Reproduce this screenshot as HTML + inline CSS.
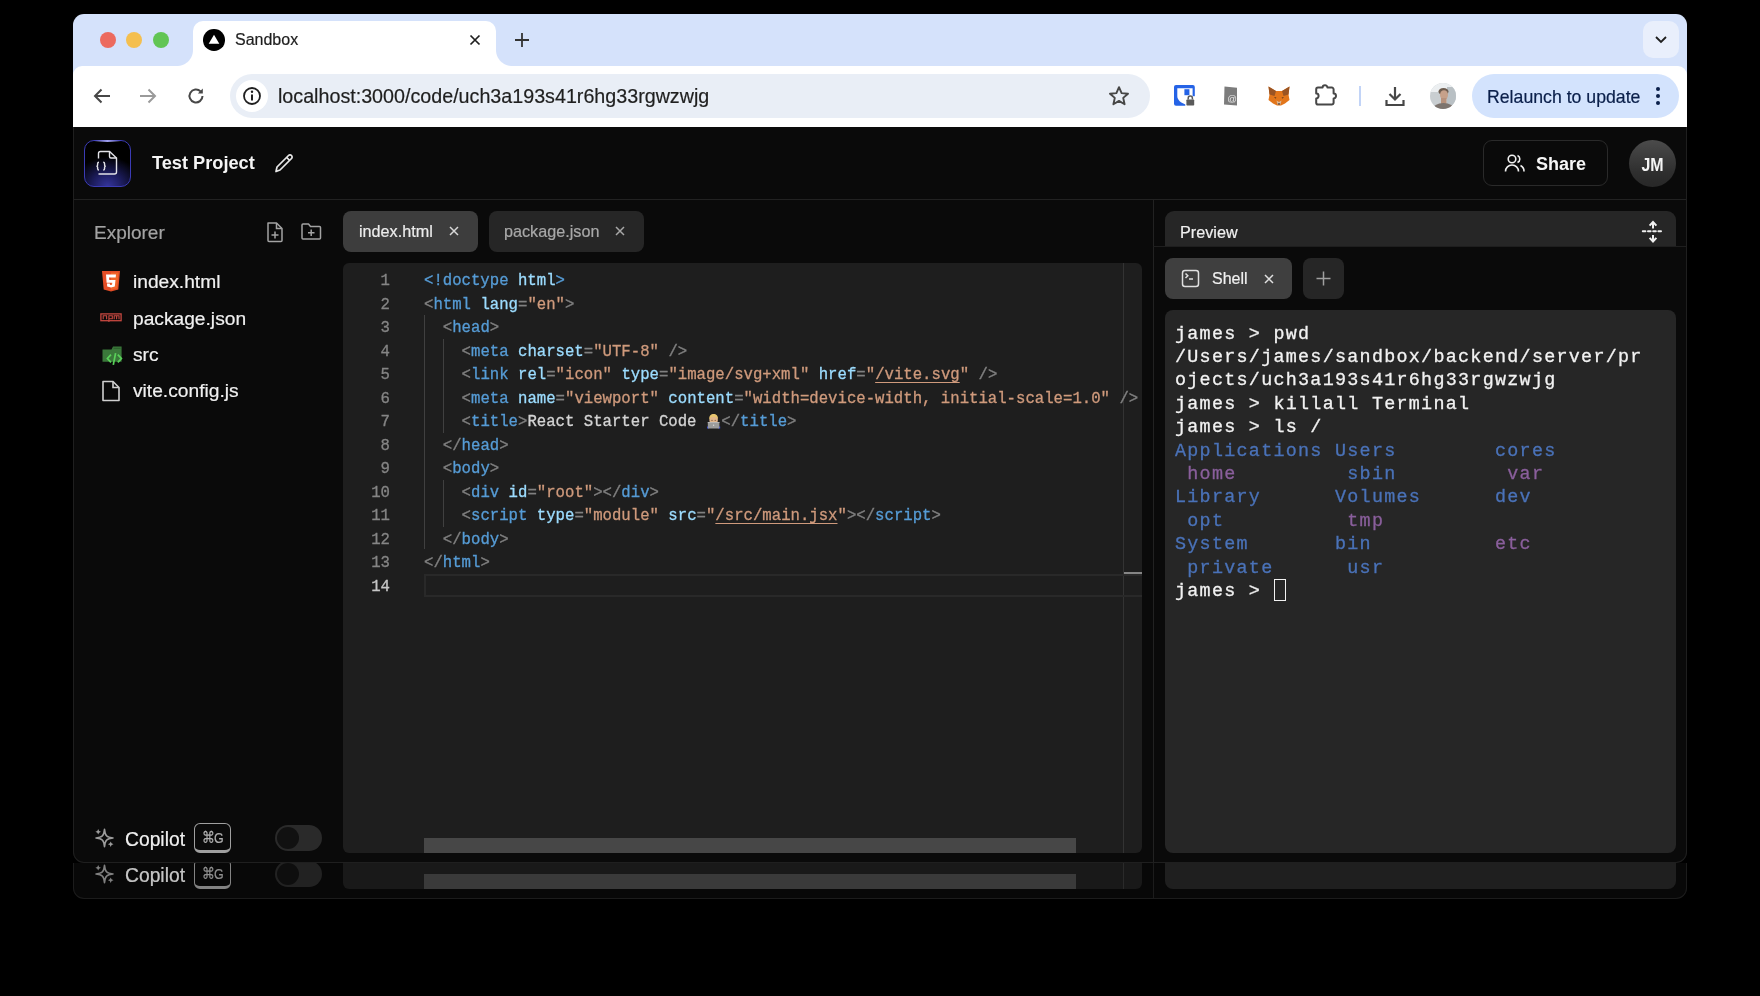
<!DOCTYPE html>
<html><head><meta charset="utf-8">
<style>
*{box-sizing:border-box;margin:0;padding:0}
html,body{width:1760px;height:996px;background:#000;overflow:hidden;font-family:"Liberation Sans",sans-serif}
.a{position:absolute}
.layer{position:absolute;left:0;top:0;width:1760px;height:996px}
#win{clip-path:inset(14px 73px 133px 73px round 11px);will-change:transform}
#ghost{clip-path:inset(863px 73px 97px 73px round 0 0 11px 11px);will-change:transform}
.dot{width:16px;height:16px;border-radius:50%}
.mono{font-family:"Liberation Mono",monospace;-webkit-text-stroke:0.3px}
.t{white-space:pre;line-height:1;-webkit-text-stroke:0.2px}
svg{position:absolute;overflow:visible}
</style></head><body>
<div id="win" class="layer">
  <!-- tab strip -->
  <div class="a" style="left:73px;top:13px;width:1614px;height:66px;background:#d5e2fb"></div>
  <div class="a dot" style="left:100.2px;top:32.2px;background:#ec6a5e"></div>
  <div class="a dot" style="left:126.3px;top:32.2px;background:#f4bf4f"></div>
  <div class="a dot" style="left:152.6px;top:32.2px;background:#61c554"></div>
  <!-- active tab -->
  <div class="a" style="left:193px;top:21px;width:303px;height:46px;background:#fff;border-radius:10px 10px 0 0"></div>
  <div class="a" style="left:177px;top:50px;width:16px;height:16px;background:radial-gradient(circle at 0 0,#d5e2fb 15.5px,#fff 16.5px)"></div>
  <div class="a" style="left:496px;top:50px;width:16px;height:16px;background:radial-gradient(circle at 100% 0,#d5e2fb 15.5px,#fff 16.5px)"></div>
  <div class="a" style="left:203.3px;top:29.3px;width:21.4px;height:21.4px;border-radius:50%;background:#000"></div>
  <svg style="left:204px;top:30px" width="20" height="20"><path d="M10 4.8 L15.3 13.8 H4.7 Z" fill="#fff"></path></svg>
  <div class="a t" style="left:235px;top:32.4px;font-size:16px;color:#1f1f1f">Sandbox</div>
  <svg style="left:470px;top:35px" width="10" height="10"><path d="M0.5 0.5L9.5 9.5M9.5 0.5L0.5 9.5" stroke="#1f1f1f" stroke-width="1.7"></path></svg>
  <svg style="left:514px;top:32px" width="16" height="16"><path d="M8 1V15M1 8H15" stroke="#333" stroke-width="1.8"></path></svg>
  <div class="a" style="left:1642.7px;top:21.2px;width:36.5px;height:36.5px;border-radius:10px;background:#e9effc"></div>
  <svg style="left:1654px;top:35px" width="14" height="9"><path d="M2 2L7 7L12 2" fill="none" stroke="#1f1f1f" stroke-width="1.8"></path></svg>

  <!-- toolbar -->
  <div class="a" style="left:73px;top:66px;width:1614px;height:61px;background:#fff;border-radius:9px 9px 0 0"></div>
  <svg style="left:92px;top:86px" width="20" height="20"><path d="M18 10H3M9.5 3.5L3 10L9.5 16.5" fill="none" stroke="#474747" stroke-width="2"></path></svg>
  <svg style="left:138px;top:86px" width="20" height="20"><path d="M2 10H17M10.5 3.5L17 10L10.5 16.5" fill="none" stroke="#9a9a9a" stroke-width="2"></path></svg>
  <svg style="left:186px;top:86px" width="20" height="20"><path d="M16.5 10A6.5 6.5 0 1 1 14.6 5.4" fill="none" stroke="#474747" stroke-width="2"></path><path d="M16.8 2.5V7.5H11.8Z" fill="#474747"></path></svg>
  <div class="a" style="left:230px;top:74px;width:920px;height:44px;border-radius:22px;background:#e9eef6"></div>
  <div class="a" style="left:236px;top:80px;width:32px;height:32px;border-radius:50%;background:#fff"></div>
  <svg style="left:242px;top:86px" width="20" height="20"><circle cx="10" cy="10" r="8" fill="none" stroke="#1f1f1f" stroke-width="1.8"></circle><path d="M10 8.5V14.5" stroke="#1f1f1f" stroke-width="2"></path><circle cx="10" cy="5.8" r="1.2" fill="#1f1f1f"></circle></svg>
  <div class="a t" style="left:278px;top:87px;font-size:19.7px;color:#1f1f1f">localhost:3000/code/uch3a193s41r6hg33rgwzwjg</div>
  <svg style="left:1108px;top:85px" width="22" height="22"><path d="M11 2.2L13.6 8.1L20 8.7L15.2 12.9L16.6 19.2L11 15.9L5.4 19.2L6.8 12.9L2 8.7L8.4 8.1Z" fill="none" stroke="#474747" stroke-width="1.9" stroke-linejoin="round"></path></svg>
  <!-- extension icons -->
  <svg style="left:1174px;top:85px" width="22" height="22"><rect x="0" y="0" width="20.8" height="20.8" rx="2" fill="#2563e6"></rect><path d="M3.3 3.2H18.6V19.5H11.5C7 18 3.3 15 3.3 11Z" fill="#fff"></path><rect x="10.4" y="4.2" width="5" height="6" fill="#2563e6"></rect><rect x="11.3" y="11.2" width="10" height="10" fill="#fff"></rect><rect x="12.4" y="14.4" width="7.8" height="6.2" rx="0.8" fill="#5a5a5a"></rect><path d="M14.2 14.6V13.2A2.1 2.1 0 0 1 18.4 13.2V14.6" fill="none" stroke="#5a5a5a" stroke-width="1.5"></path></svg>
  <svg style="left:1223px;top:86px" width="15" height="20"><path d="M1.5 0.5L14 1.8V19.5L1 18.5Z" fill="#7c7c7c"></path><text x="9" y="16" font-size="9.5" font-family="Liberation Sans" fill="#e8e8e8" text-anchor="middle">@</text></svg>
  <svg style="left:1267.5px;top:86px" width="22" height="20"><path d="M0.5 0.5L8 5H14L21.5 0.5L20.5 8.5L21.5 14L17 17.5L13 19.5H9L5 17.5L0.5 14L1.5 8.5Z" fill="#e2761b"></path><path d="M0.5 0.5L8 5L6.5 10L1.5 8.5Z M21.5 0.5L14 5L15.5 10L20.5 8.5Z" fill="#9a5423"></path><path d="M8.5 14.5L11 16L13.5 14.5L12.5 18.5H9.5Z" fill="#d9b89a"></path><path d="M6 11L8.5 11.8L7.5 12.6Z M16 11L13.5 11.8L14.5 12.6Z" fill="#3a2a22"></path><path d="M9.8 17.5H12.2L11 19Z" fill="#1a1a1a"></path></svg>
  <svg style="left:1315px;top:83px" width="23" height="23"><path d="M3 4.6H7.6A2.4 2.4 0 0 1 12.4 4.6H16.8A1.8 1.8 0 0 1 18.6 6.4V10.6A2.4 2.4 0 0 1 18.6 15.4V19.8A1.8 1.8 0 0 1 16.8 21.6H3A1.8 1.8 0 0 1 1.2 19.8V15.4A2.4 2.4 0 0 0 1.2 10.6V6.4A1.8 1.8 0 0 1 3 4.6Z" fill="none" stroke="#474747" stroke-width="2" stroke-linejoin="round"></path></svg>
  <div class="a" style="left:1359px;top:86px;width:2px;height:20px;background:#c2d4f7"></div>
  <svg style="left:1384px;top:85px" width="22" height="22"><path d="M11 2V14M5.5 9L11 14.5L16.5 9" fill="none" stroke="#474747" stroke-width="2.2"></path><path d="M2.5 15V20H19.5V15" fill="none" stroke="#474747" stroke-width="2.2"></path></svg>
  <svg style="left:1429.7px;top:82.9px" width="26" height="26"><defs><clipPath id="avc"><circle cx="13" cy="13" r="13"></circle></clipPath></defs><g clip-path="url(#avc)"><rect width="26" height="26" fill="#c9ced1"></rect><rect x="0" y="0" width="26" height="9" fill="#eceff1"></rect><rect x="17" y="4" width="9" height="18" fill="#b9c0c4"></rect><ellipse cx="13.5" cy="8.5" rx="5" ry="3.6" fill="#6e5d50"></ellipse><ellipse cx="14" cy="12" rx="4" ry="4.8" fill="#c7a18a"></ellipse><rect x="11" y="15" width="5.5" height="6" fill="#b8927c"></rect><ellipse cx="13.5" cy="27" rx="11" ry="7" fill="#7d746e"></ellipse></g></svg>
  <div class="a" style="left:1472px;top:74px;width:207px;height:44px;border-radius:22px;background:#d3e3fd"></div>
  <div class="a t" style="left:1487px;top:88.5px;font-size:17.7px;color:#0a1f4a">Relaunch to update</div>
  <svg style="left:1654px;top:86px" width="8" height="20"><circle cx="4" cy="3" r="2" fill="#0a1f4a"></circle><circle cx="4" cy="10" r="2" fill="#0a1f4a"></circle><circle cx="4" cy="17" r="2" fill="#0a1f4a"></circle></svg>

  <!-- app -->
  <div class="a" style="left:73px;top:127px;width:1614px;height:735px;background:#0a0a0a"></div>
  <div class="a" style="left:73px;top:199px;width:1614px;height:1px;background:#222"></div>
  <!-- logo -->
  <div class="a" style="left:84px;top:140px;width:47px;height:47px;border-radius:10px;border:1.6px solid #3b3bb5;background:radial-gradient(ellipse 75% 65% at 50% 100%,#34349a 0%,#1c1c5c 45%,#000 100%)"></div>
  <div class="a" style="left:94px;top:140px;width:27px;height:2px;background:linear-gradient(90deg,rgba(150,150,240,0),#a0a0f0,rgba(150,150,240,0))"></div>
  <svg style="left:80px;top:136px" width="56" height="56"><path d="M18.5 22.5V17.5A2 2 0 0 1 20.5 15.5H29.5L36.5 22V36A2 2 0 0 1 34.5 38H18.5" fill="none" stroke="#e2e2e8" stroke-width="1.4"></path><path d="M29.5 15.5V20.5A1.5 1.5 0 0 0 31 22H36.5" fill="none" stroke="#e2e2e8" stroke-width="1.4"></path><path d="M19 26.3Q17.6 26.3 17.6 27.8V29.3Q17.6 30.2 16.4 30.2Q17.6 30.2 17.6 31.1V32.6Q17.6 34.1 19 34.1M23.2 26.3Q24.6 26.3 24.6 27.8V29.3Q24.6 30.2 25.8 30.2Q24.6 30.2 24.6 31.1V32.6Q24.6 34.1 23.2 34.1" fill="none" stroke="#e2e2e8" stroke-width="1.4"></path></svg>
  <div class="a t" style="left:152px;top:154px;font-size:18.2px;font-weight:bold;color:#f5f5f5;-webkit-text-stroke:0">Test Project</div>
  <svg style="left:273px;top:152px" width="22" height="22"><path d="M3 19.5L4 15L15.5 3.5A2.1 2.1 0 0 1 18.5 6.5L7 18Z" fill="none" stroke="#e8e8e8" stroke-width="1.7" stroke-linejoin="round"></path><path d="M13.6 5.4L16.6 8.4" stroke="#e8e8e8" stroke-width="1.5"></path></svg>
  <div class="a" style="left:1483px;top:140px;width:125px;height:46px;border-radius:9px;border:1px solid #2a2a2a;background:#0a0a0a"></div>
  <svg style="left:1504px;top:153px" width="22" height="20"><circle cx="8" cy="6" r="3.8" fill="none" stroke="#f0f0f0" stroke-width="1.6"></circle><path d="M1.5 18.5A6.5 6.5 0 0 1 14.5 18.5" fill="none" stroke="#f0f0f0" stroke-width="1.6"></path><path d="M13.5 2.5A3.8 3.8 0 0 1 13.5 9.5M16.5 12.5A6.5 6.5 0 0 1 20 18.5" fill="none" stroke="#f0f0f0" stroke-width="1.6"></path></svg>
  <div class="a t" style="left:1536px;top:154.5px;font-size:18px;font-weight:bold;color:#f5f5f5;-webkit-text-stroke:0">Share</div>
  <div class="a" style="left:1629px;top:140px;width:47px;height:47px;border-radius:50%;background:linear-gradient(#4b4b4b,#2e2e2e 70%,#282828)"></div>
  <div class="a t" style="left:1629px;top:154.5px;width:47px;text-align:center;font-size:19px;font-weight:bold;color:#f5f5f5;-webkit-text-stroke:0;transform:scaleX(0.84)">JM</div>

  <!-- explorer -->
  <div class="a t" style="left:94px;top:222.5px;font-size:19px;color:#a3a3a3">Explorer</div>
  <svg style="left:265px;top:221px" width="20" height="22"><path d="M3 2H11.5L17 7.5V19.5A1 1 0 0 1 16 20.5H4A1 1 0 0 1 3 19.5Z" fill="none" stroke="#a3a3a3" stroke-width="1.5" stroke-linejoin="round"></path><path d="M11.5 2V7.5H17M10 10.5V17.5M6.5 14H13.5" fill="none" stroke="#a3a3a3" stroke-width="1.5"></path></svg>
  <svg style="left:300px;top:222px" width="23" height="19"><path d="M2 3A1 1 0 0 1 3 2H8.5L10.5 4.5H19.5A1 1 0 0 1 20.5 5.5V16A1 1 0 0 1 19.5 17H3A1 1 0 0 1 2 16Z" fill="none" stroke="#a3a3a3" stroke-width="1.5" stroke-linejoin="round"></path><path d="M11.2 7.5V14M8 10.8H14.5" stroke="#a3a3a3" stroke-width="1.5"></path></svg>

  <svg style="left:101px;top:270px" width="20" height="22"><path d="M1 1H19L17.3 19.5L10 21.5L2.7 19.5Z" fill="#e44d26"></path><path d="M10 2.5H17.5L16 18.3L10 20Z" fill="#f16529"></path><path d="M5 4.5H15L14.7 7.5H8L8.3 10H14.5L13.8 16.5L10 17.6L6.2 16.5L6 13.5H8.8L9 14.8L10 15.1L11 14.8L11.3 12.7H5.6Z" fill="#fff"></path></svg>
  <div class="a t" style="left:133px;top:272px;font-size:19.2px;color:#f0f0f0">index.html</div>
  <svg style="left:100px;top:313px" width="23" height="10"><rect x="0.9" y="0.9" width="20.2" height="6.8" fill="none" stroke="#c64840" stroke-width="1.3"></rect><path d="M3.2 6.3V2.7H6.6V6.3M8.9 8.9V2.7H12.3V5.7H8.9M14.2 6.3V2.7H19V6.3M16.6 2.7V6.3" fill="none" stroke="#c64840" stroke-width="1.1"></path></svg>
  <div class="a t" style="left:133px;top:309px;font-size:19.2px;color:#f0f0f0">package.json</div>
  <svg style="left:101px;top:345px" width="23" height="22"><path d="M1.5 4.6H10.5L12 1.6H20.6V16.7H1.5Z" fill="#3a783a"></path><path d="M12.6 3.3H19.6" stroke="#2b5d2b" stroke-width="1"></path><path d="M10 9.6L6.4 13.5L10 17.4M16.8 9.6L20.4 13.5L16.8 17.4M14.6 8.2L12.3 19.8" fill="none" stroke="#5ad25a" stroke-width="1.7"></path></svg>
  <div class="a t" style="left:133px;top:345.2px;font-size:19.2px;color:#f0f0f0">src</div>
  <svg style="left:101px;top:380px" width="20" height="22"><path d="M2 1.5H12L18 7.5V20.5H2Z" fill="none" stroke="#d0d0d0" stroke-width="1.6" stroke-linejoin="round"></path><path d="M12 1.5V7.5H18" fill="none" stroke="#d0d0d0" stroke-width="1.6"></path></svg>
  <div class="a t" style="left:133px;top:381.2px;font-size:19.2px;color:#f0f0f0">vite.config.js</div>

  <!-- editor tabs -->
  <div class="a" style="left:343px;top:211px;width:135px;height:41px;border-radius:8px;background:#3d3d3d"></div>
  <div class="a t" style="left:359px;top:223px;font-size:16.2px;color:#ececec">index.html</div>
  <svg style="left:449px;top:226px" width="10" height="10"><path d="M1 1L9 9M9 1L1 9" stroke="#d8d8d8" stroke-width="1.5"></path></svg>
  <div class="a" style="left:489px;top:211px;width:155px;height:41px;border-radius:8px;background:#262626"></div>
  <div class="a t" style="left:504px;top:223px;font-size:16.2px;color:#a8a8a8">package.json</div>
  <svg style="left:615px;top:226px" width="10" height="10"><path d="M1 1L9 9M9 1L1 9" stroke="#a8a8a8" stroke-width="1.5"></path></svg>

  <!-- code box -->
  <div class="a" style="left:343px;top:263px;width:799px;height:590px;border-radius:6px;background:#1e1e1e"></div>
  <div class="a" style="left:1123px;top:263px;width:1px;height:590px;background:#333"></div>
  <div class="a" style="left:1124px;top:572px;width:18px;height:3px;background:#858585"></div>
  <div class="a" style="left:424px;top:574px;width:718px;height:23px;border:2px solid #292929;border-right:none"></div>
  <div class="a" style="left:424px;top:837.5px;width:652px;height:15.5px;background:#474747"></div>
  <!-- indent guides -->
  <div class="a" style="left:424px;top:315px;width:1px;height:234px;background:#404040"></div>
  <div class="a" style="left:443px;top:339px;width:1px;height:94px;background:#404040"></div>
  <div class="a" style="left:443px;top:480px;width:1px;height:47px;background:#404040"></div>
  <div id="code" class="a mono" style="left:343px;top:270px;font-size:15.67px;line-height:23.5px;white-space:pre;color:#d4d4d4"><div style="position:relative;height:23.5px"><span style="position:absolute;left:0;width:47px;text-align:right;color:#858585">1</span><span style="position:absolute;left:81px"><span style="color:#569cd6">&lt;!doctype</span><span style="color:#d4d4d4"> </span><span style="color:#9cdcfe">html</span><span style="color:#569cd6">&gt;</span></span></div><div style="position:relative;height:23.5px"><span style="position:absolute;left:0;width:47px;text-align:right;color:#858585">2</span><span style="position:absolute;left:81px"><span style="color:#808080">&lt;</span><span style="color:#569cd6">html</span><span style="color:#d4d4d4"> </span><span style="color:#9cdcfe">lang</span><span style="color:#808080">=</span><span style="color:#cf9a7c">"en"</span><span style="color:#808080">&gt;</span></span></div><div style="position:relative;height:23.5px"><span style="position:absolute;left:0;width:47px;text-align:right;color:#858585">3</span><span style="position:absolute;left:81px"><span style="color:#d4d4d4">  </span><span style="color:#808080">&lt;</span><span style="color:#569cd6">head</span><span style="color:#808080">&gt;</span></span></div><div style="position:relative;height:23.5px"><span style="position:absolute;left:0;width:47px;text-align:right;color:#858585">4</span><span style="position:absolute;left:81px"><span style="color:#d4d4d4">    </span><span style="color:#808080">&lt;</span><span style="color:#569cd6">meta</span><span style="color:#d4d4d4"> </span><span style="color:#9cdcfe">charset</span><span style="color:#808080">=</span><span style="color:#cf9a7c">"UTF-8"</span><span style="color:#d4d4d4"> </span><span style="color:#808080">/&gt;</span></span></div><div style="position:relative;height:23.5px"><span style="position:absolute;left:0;width:47px;text-align:right;color:#858585">5</span><span style="position:absolute;left:81px"><span style="color:#d4d4d4">    </span><span style="color:#808080">&lt;</span><span style="color:#569cd6">link</span><span style="color:#d4d4d4"> </span><span style="color:#9cdcfe">rel</span><span style="color:#808080">=</span><span style="color:#cf9a7c">"icon"</span><span style="color:#d4d4d4"> </span><span style="color:#9cdcfe">type</span><span style="color:#808080">=</span><span style="color:#cf9a7c">"image/svg+xml"</span><span style="color:#d4d4d4"> </span><span style="color:#9cdcfe">href</span><span style="color:#808080">=</span><span style="color:#cf9a7c">"</span><span style="color:#cf9a7c;text-decoration:underline;text-underline-offset:3px">/vite.svg</span><span style="color:#cf9a7c">"</span><span style="color:#d4d4d4"> </span><span style="color:#808080">/&gt;</span></span></div><div style="position:relative;height:23.5px"><span style="position:absolute;left:0;width:47px;text-align:right;color:#858585">6</span><span style="position:absolute;left:81px"><span style="color:#d4d4d4">    </span><span style="color:#808080">&lt;</span><span style="color:#569cd6">meta</span><span style="color:#d4d4d4"> </span><span style="color:#9cdcfe">name</span><span style="color:#808080">=</span><span style="color:#cf9a7c">"viewport"</span><span style="color:#d4d4d4"> </span><span style="color:#9cdcfe">content</span><span style="color:#808080">=</span><span style="color:#cf9a7c">"width=device-width, initial-scale=1.0"</span><span style="color:#d4d4d4"> </span><span style="color:#808080">/&gt;</span></span></div><div style="position:relative;height:23.5px"><span style="position:absolute;left:0;width:47px;text-align:right;color:#858585">7</span><span style="position:absolute;left:81px"><span style="color:#d4d4d4">    </span><span style="color:#808080">&lt;</span><span style="color:#569cd6">title</span><span style="color:#808080">&gt;</span><span style="color:#d4d4d4">React Starter Code </span><span style="display:inline-block;width:15.4px;height:16px;vertical-align:-2.5px;position:relative"><svg style="left:0;top:0" width="16" height="16"><rect x="1" y="13.5" width="2" height="2" fill="#2d43d6"></rect><rect x="12.2" y="13.5" width="2" height="2" fill="#2d43d6"></rect><ellipse cx="7.6" cy="7" rx="4.3" ry="4.6" fill="#e2b68c"></ellipse><path d="M3.2 6.5C3 2.5 5 1 7.6 1C10.2 1 12.2 2.5 12 6.5C11 4.5 9.5 4 7.6 4C5.7 4 4.2 4.5 3.2 6.5Z" fill="#e7c56e"></path><circle cx="6" cy="7.3" r="0.6" fill="#6b4a32"></circle><circle cx="9.2" cy="7.3" r="0.6" fill="#6b4a32"></circle><rect x="1.8" y="9" width="11.6" height="6.6" rx="0.6" fill="#9c9c9c"></rect><rect x="1.8" y="9" width="11.6" height="1" fill="#b5b5b5"></rect><circle cx="7.6" cy="12.2" r="0.7" fill="#d8d8d8"></circle></svg></span><span style="color:#808080">&lt;/</span><span style="color:#569cd6">title</span><span style="color:#808080">&gt;</span></span></div><div style="position:relative;height:23.5px"><span style="position:absolute;left:0;width:47px;text-align:right;color:#858585">8</span><span style="position:absolute;left:81px"><span style="color:#d4d4d4">  </span><span style="color:#808080">&lt;/</span><span style="color:#569cd6">head</span><span style="color:#808080">&gt;</span></span></div><div style="position:relative;height:23.5px"><span style="position:absolute;left:0;width:47px;text-align:right;color:#858585">9</span><span style="position:absolute;left:81px"><span style="color:#d4d4d4">  </span><span style="color:#808080">&lt;</span><span style="color:#569cd6">body</span><span style="color:#808080">&gt;</span></span></div><div style="position:relative;height:23.5px"><span style="position:absolute;left:0;width:47px;text-align:right;color:#858585">10</span><span style="position:absolute;left:81px"><span style="color:#d4d4d4">    </span><span style="color:#808080">&lt;</span><span style="color:#569cd6">div</span><span style="color:#d4d4d4"> </span><span style="color:#9cdcfe">id</span><span style="color:#808080">=</span><span style="color:#cf9a7c">"root"</span><span style="color:#808080">&gt;&lt;/</span><span style="color:#569cd6">div</span><span style="color:#808080">&gt;</span></span></div><div style="position:relative;height:23.5px"><span style="position:absolute;left:0;width:47px;text-align:right;color:#858585">11</span><span style="position:absolute;left:81px"><span style="color:#d4d4d4">    </span><span style="color:#808080">&lt;</span><span style="color:#569cd6">script</span><span style="color:#d4d4d4"> </span><span style="color:#9cdcfe">type</span><span style="color:#808080">=</span><span style="color:#cf9a7c">"module"</span><span style="color:#d4d4d4"> </span><span style="color:#9cdcfe">src</span><span style="color:#808080">=</span><span style="color:#cf9a7c">"</span><span style="color:#cf9a7c;text-decoration:underline;text-underline-offset:3px">/src/main.jsx</span><span style="color:#cf9a7c">"</span><span style="color:#808080">&gt;&lt;/</span><span style="color:#569cd6">script</span><span style="color:#808080">&gt;</span></span></div><div style="position:relative;height:23.5px"><span style="position:absolute;left:0;width:47px;text-align:right;color:#858585">12</span><span style="position:absolute;left:81px"><span style="color:#d4d4d4">  </span><span style="color:#808080">&lt;/</span><span style="color:#569cd6">body</span><span style="color:#808080">&gt;</span></span></div><div style="position:relative;height:23.5px"><span style="position:absolute;left:0;width:47px;text-align:right;color:#858585">13</span><span style="position:absolute;left:81px"><span style="color:#808080">&lt;/</span><span style="color:#569cd6">html</span><span style="color:#808080">&gt;</span></span></div><div style="position:relative;height:23.5px"><span style="position:absolute;left:0;width:47px;text-align:right;color:#c6c6c6">14</span><span style="position:absolute;left:81px"></span></div></div>

  <!-- right panel -->
  <div class="a" style="left:1153px;top:200px;width:1px;height:662px;background:#222"></div>
  <div class="a" style="left:1165px;top:211px;width:511px;height:36px;border-radius:9px 9px 0 0;background:#262626"></div>
  <div class="a" style="left:1153px;top:246px;width:534px;height:1px;background:#1e1e1e"></div>
  <div class="a t" style="left:1180px;top:223.5px;font-size:16.2px;color:#f0f0f0">Preview</div>
  <svg style="left:1642px;top:220px" width="22" height="24"><path d="M11 2.5V8.5M11 15V21" stroke="#f0f0f0" stroke-width="2"></path><path d="M7.6 5.6L11 2L14.4 5.6M7.6 17.9L11 21.5L14.4 17.9" fill="none" stroke="#f0f0f0" stroke-width="2"></path><path d="M0.8 11.3H20.6" stroke="#f0f0f0" stroke-width="2" stroke-linecap="round" stroke-dasharray="2.6 2.6"></path></svg>
  <div class="a" style="left:1165px;top:258px;width:127px;height:41px;border-radius:8px;background:#3f3f3f"></div>
  <svg style="left:1181px;top:269px" width="19" height="19"><rect x="1.5" y="1.5" width="16" height="16" rx="2.5" fill="none" stroke="#e0e0e0" stroke-width="1.5"></rect><path d="M4.5 4.5L6.8 6.8L4.5 9M8 10H12" fill="none" stroke="#e0e0e0" stroke-width="1.5"></path></svg>
  <div class="a t" style="left:1212px;top:270.8px;font-size:16px;color:#f0f0f0">Shell</div>
  <svg style="left:1264px;top:274px" width="10" height="10"><path d="M1 1L9 9M9 1L1 9" stroke="#e0e0e0" stroke-width="1.5"></path></svg>
  <div class="a" style="left:1303px;top:258px;width:41px;height:41px;border-radius:8px;background:#262626"></div>
  <svg style="left:1316px;top:271px" width="15" height="15"><path d="M7.5 0.5V14.5M0.5 7.5H14.5" stroke="#a0a0a0" stroke-width="1.5"></path></svg>
  <div class="a" style="left:1165px;top:310px;width:511px;height:543px;border-radius:8px;background:#262626"></div>
  <div id="term" class="a mono" style="left:1175px;top:322.5px;font-size:18.4px;line-height:23.4px;letter-spacing:1.27px;white-space:pre;color:#f2f2f2"><div><span style="color:#f2f2f2">james &gt; pwd</span></div><div><span style="color:#f2f2f2">/Users/james/sandbox/backend/server/pr</span></div><div><span style="color:#f2f2f2">ojects/uch3a193s41r6hg33rgwzwjg</span></div><div><span style="color:#f2f2f2">james &gt; killall Terminal</span></div><div><span style="color:#f2f2f2">james &gt; ls /</span></div><div><span style="color:#4a72b8">Applications</span><span style="color:#f2f2f2"> </span><span style="color:#4a72b8">Users</span><span style="color:#f2f2f2">        </span><span style="color:#4a72b8">cores</span></div><div><span style="color:#f2f2f2"> </span><span style="color:#8a5f9c">home</span><span style="color:#f2f2f2">         </span><span style="color:#4a72b8">sbin</span><span style="color:#f2f2f2">         </span><span style="color:#8a5f9c">var</span></div><div><span style="color:#4a72b8">Library</span><span style="color:#f2f2f2">      </span><span style="color:#4a72b8">Volumes</span><span style="color:#f2f2f2">      </span><span style="color:#4a72b8">dev</span></div><div><span style="color:#f2f2f2"> </span><span style="color:#4a72b8">opt</span><span style="color:#f2f2f2">          </span><span style="color:#8a5f9c">tmp</span></div><div><span style="color:#4a72b8">System</span><span style="color:#f2f2f2">       </span><span style="color:#4a72b8">bin</span><span style="color:#f2f2f2">          </span><span style="color:#8a5f9c">etc</span></div><div><span style="color:#f2f2f2"> </span><span style="color:#4a72b8">private</span><span style="color:#f2f2f2">      </span><span style="color:#4a72b8">usr</span></div><div><span style="color:#f2f2f2">james &gt; </span></div></div>
  <div class="a" style="left:1274px;top:579px;width:12px;height:22px;border:1.5px solid #f2f2f2"></div>

  <!-- bottom copilot -->
  <div id="bottom">
  <svg style="left:94px;top:827px" width="22" height="22"><path d="M10.5 2.4C11.1 8.6 12.4 10.4 19 11C12.4 11.6 11.1 13.4 10.5 19.6C9.9 13.4 8.6 11.6 2 11C8.6 10.4 9.9 8.6 10.5 2.4Z" fill="none" stroke="#9c9c9c" stroke-width="1.6" stroke-linejoin="round"></path><path d="M4.2 2L5.1 3.9L7 4.8L5.1 5.7L4.2 7.6L3.3 5.7L1.4 4.8L3.3 3.9Z M16.7 14.4L17.6 16.3L19.5 17.2L17.6 18.1L16.7 20L15.8 18.1L13.9 17.2L15.8 16.3Z" fill="#9c9c9c"></path></svg>
  <div class="a t" style="left:125px;top:830px;font-size:19.3px;color:#f0f0f0">Copilot</div>
  <div class="a" style="left:194px;top:823px;width:37px;height:30px;border-radius:6px;border:1.5px solid #a0a0a0;border-bottom-width:3px;background:#0a0a0a"></div>
  <div class="a t" style="left:194px;top:830px;width:37px;text-align:center;font-size:15.5px;color:#b0b0b0;transform:scaleX(0.8);letter-spacing:-0.6px">⌘G</div>
  <div class="a" style="left:275px;top:825px;width:47px;height:26px;border-radius:13px;background:#2a2a2a"></div>
  <div class="a" style="left:277px;top:827px;width:22px;height:22px;border-radius:50%;background:#111"></div>
  </div>
</div>
<div class="a" style="left:73px;top:127px;width:1614px;height:736px;border:1px solid #1f1f1f;border-top:none;border-radius:0 0 11px 11px"></div>
<div id="ghost" class="layer"><div id="" class="layer" style="clip-path: none; top: 36px; filter: brightness(0.82);">
  <!-- tab strip -->
  <div class="a" style="left:73px;top:13px;width:1614px;height:66px;background:#d5e2fb"></div>
  <div class="a dot" style="left:100.2px;top:32.2px;background:#ec6a5e"></div>
  <div class="a dot" style="left:126.3px;top:32.2px;background:#f4bf4f"></div>
  <div class="a dot" style="left:152.6px;top:32.2px;background:#61c554"></div>
  <!-- active tab -->
  <div class="a" style="left:193px;top:21px;width:303px;height:46px;background:#fff;border-radius:10px 10px 0 0"></div>
  <div class="a" style="left:177px;top:50px;width:16px;height:16px;background:radial-gradient(circle at 0 0,#d5e2fb 15.5px,#fff 16.5px)"></div>
  <div class="a" style="left:496px;top:50px;width:16px;height:16px;background:radial-gradient(circle at 100% 0,#d5e2fb 15.5px,#fff 16.5px)"></div>
  <div class="a" style="left:203.3px;top:29.3px;width:21.4px;height:21.4px;border-radius:50%;background:#000"></div>
  <svg style="left:204px;top:30px" width="20" height="20"><path d="M10 4.8 L15.3 13.8 H4.7 Z" fill="#fff"></path></svg>
  <div class="a t" style="left:235px;top:32.4px;font-size:16px;color:#1f1f1f">Sandbox</div>
  <svg style="left:470px;top:35px" width="10" height="10"><path d="M0.5 0.5L9.5 9.5M9.5 0.5L0.5 9.5" stroke="#1f1f1f" stroke-width="1.7"></path></svg>
  <svg style="left:514px;top:32px" width="16" height="16"><path d="M8 1V15M1 8H15" stroke="#333" stroke-width="1.8"></path></svg>
  <div class="a" style="left:1642.7px;top:21.2px;width:36.5px;height:36.5px;border-radius:10px;background:#e9effc"></div>
  <svg style="left:1654px;top:35px" width="14" height="9"><path d="M2 2L7 7L12 2" fill="none" stroke="#1f1f1f" stroke-width="1.8"></path></svg>

  <!-- toolbar -->
  <div class="a" style="left:73px;top:66px;width:1614px;height:61px;background:#fff;border-radius:9px 9px 0 0"></div>
  <svg style="left:92px;top:86px" width="20" height="20"><path d="M18 10H3M9.5 3.5L3 10L9.5 16.5" fill="none" stroke="#474747" stroke-width="2"></path></svg>
  <svg style="left:138px;top:86px" width="20" height="20"><path d="M2 10H17M10.5 3.5L17 10L10.5 16.5" fill="none" stroke="#9a9a9a" stroke-width="2"></path></svg>
  <svg style="left:186px;top:86px" width="20" height="20"><path d="M16.5 10A6.5 6.5 0 1 1 14.6 5.4" fill="none" stroke="#474747" stroke-width="2"></path><path d="M16.8 2.5V7.5H11.8Z" fill="#474747"></path></svg>
  <div class="a" style="left:230px;top:74px;width:920px;height:44px;border-radius:22px;background:#e9eef6"></div>
  <div class="a" style="left:236px;top:80px;width:32px;height:32px;border-radius:50%;background:#fff"></div>
  <svg style="left:242px;top:86px" width="20" height="20"><circle cx="10" cy="10" r="8" fill="none" stroke="#1f1f1f" stroke-width="1.8"></circle><path d="M10 8.5V14.5" stroke="#1f1f1f" stroke-width="2"></path><circle cx="10" cy="5.8" r="1.2" fill="#1f1f1f"></circle></svg>
  <div class="a t" style="left:278px;top:87px;font-size:19.7px;color:#1f1f1f">localhost:3000/code/uch3a193s41r6hg33rgwzwjg</div>
  <svg style="left:1108px;top:85px" width="22" height="22"><path d="M11 2.2L13.6 8.1L20 8.7L15.2 12.9L16.6 19.2L11 15.9L5.4 19.2L6.8 12.9L2 8.7L8.4 8.1Z" fill="none" stroke="#474747" stroke-width="1.9" stroke-linejoin="round"></path></svg>
  <!-- extension icons -->
  <svg style="left:1174px;top:85px" width="22" height="22"><rect x="0" y="0" width="20.8" height="20.8" rx="2" fill="#2563e6"></rect><path d="M3.3 3.2H18.6V19.5H11.5C7 18 3.3 15 3.3 11Z" fill="#fff"></path><rect x="10.4" y="4.2" width="5" height="6" fill="#2563e6"></rect><rect x="11.3" y="11.2" width="10" height="10" fill="#fff"></rect><rect x="12.4" y="14.4" width="7.8" height="6.2" rx="0.8" fill="#5a5a5a"></rect><path d="M14.2 14.6V13.2A2.1 2.1 0 0 1 18.4 13.2V14.6" fill="none" stroke="#5a5a5a" stroke-width="1.5"></path></svg>
  <svg style="left:1223px;top:86px" width="15" height="20"><path d="M1.5 0.5L14 1.8V19.5L1 18.5Z" fill="#7c7c7c"></path><text x="9" y="16" font-size="9.5" font-family="Liberation Sans" fill="#e8e8e8" text-anchor="middle">@</text></svg>
  <svg style="left:1267.5px;top:86px" width="22" height="20"><path d="M0.5 0.5L8 5H14L21.5 0.5L20.5 8.5L21.5 14L17 17.5L13 19.5H9L5 17.5L0.5 14L1.5 8.5Z" fill="#e2761b"></path><path d="M0.5 0.5L8 5L6.5 10L1.5 8.5Z M21.5 0.5L14 5L15.5 10L20.5 8.5Z" fill="#9a5423"></path><path d="M8.5 14.5L11 16L13.5 14.5L12.5 18.5H9.5Z" fill="#d9b89a"></path><path d="M6 11L8.5 11.8L7.5 12.6Z M16 11L13.5 11.8L14.5 12.6Z" fill="#3a2a22"></path><path d="M9.8 17.5H12.2L11 19Z" fill="#1a1a1a"></path></svg>
  <svg style="left:1315px;top:83px" width="23" height="23"><path d="M3 4.6H7.6A2.4 2.4 0 0 1 12.4 4.6H16.8A1.8 1.8 0 0 1 18.6 6.4V10.6A2.4 2.4 0 0 1 18.6 15.4V19.8A1.8 1.8 0 0 1 16.8 21.6H3A1.8 1.8 0 0 1 1.2 19.8V15.4A2.4 2.4 0 0 0 1.2 10.6V6.4A1.8 1.8 0 0 1 3 4.6Z" fill="none" stroke="#474747" stroke-width="2" stroke-linejoin="round"></path></svg>
  <div class="a" style="left:1359px;top:86px;width:2px;height:20px;background:#c2d4f7"></div>
  <svg style="left:1384px;top:85px" width="22" height="22"><path d="M11 2V14M5.5 9L11 14.5L16.5 9" fill="none" stroke="#474747" stroke-width="2.2"></path><path d="M2.5 15V20H19.5V15" fill="none" stroke="#474747" stroke-width="2.2"></path></svg>
  <svg style="left:1429.7px;top:82.9px" width="26" height="26"><defs><clipPath><circle cx="13" cy="13" r="13"></circle></clipPath></defs><g clip-path="url(#avc)"><rect width="26" height="26" fill="#c9ced1"></rect><rect x="0" y="0" width="26" height="9" fill="#eceff1"></rect><rect x="17" y="4" width="9" height="18" fill="#b9c0c4"></rect><ellipse cx="13.5" cy="8.5" rx="5" ry="3.6" fill="#6e5d50"></ellipse><ellipse cx="14" cy="12" rx="4" ry="4.8" fill="#c7a18a"></ellipse><rect x="11" y="15" width="5.5" height="6" fill="#b8927c"></rect><ellipse cx="13.5" cy="27" rx="11" ry="7" fill="#7d746e"></ellipse></g></svg>
  <div class="a" style="left:1472px;top:74px;width:207px;height:44px;border-radius:22px;background:#d3e3fd"></div>
  <div class="a t" style="left:1487px;top:88.5px;font-size:17.7px;color:#0a1f4a">Relaunch to update</div>
  <svg style="left:1654px;top:86px" width="8" height="20"><circle cx="4" cy="3" r="2" fill="#0a1f4a"></circle><circle cx="4" cy="10" r="2" fill="#0a1f4a"></circle><circle cx="4" cy="17" r="2" fill="#0a1f4a"></circle></svg>

  <!-- app -->
  <div class="a" style="left:73px;top:127px;width:1614px;height:735px;background:#0a0a0a"></div>
  <div class="a" style="left:73px;top:199px;width:1614px;height:1px;background:#222"></div>
  <!-- logo -->
  <div class="a" style="left:84px;top:140px;width:47px;height:47px;border-radius:10px;border:1.6px solid #3b3bb5;background:radial-gradient(ellipse 75% 65% at 50% 100%,#34349a 0%,#1c1c5c 45%,#000 100%)"></div>
  <div class="a" style="left:94px;top:140px;width:27px;height:2px;background:linear-gradient(90deg,rgba(150,150,240,0),#a0a0f0,rgba(150,150,240,0))"></div>
  <svg style="left:80px;top:136px" width="56" height="56"><path d="M18.5 22.5V17.5A2 2 0 0 1 20.5 15.5H29.5L36.5 22V36A2 2 0 0 1 34.5 38H18.5" fill="none" stroke="#e2e2e8" stroke-width="1.4"></path><path d="M29.5 15.5V20.5A1.5 1.5 0 0 0 31 22H36.5" fill="none" stroke="#e2e2e8" stroke-width="1.4"></path><path d="M19 26.3Q17.6 26.3 17.6 27.8V29.3Q17.6 30.2 16.4 30.2Q17.6 30.2 17.6 31.1V32.6Q17.6 34.1 19 34.1M23.2 26.3Q24.6 26.3 24.6 27.8V29.3Q24.6 30.2 25.8 30.2Q24.6 30.2 24.6 31.1V32.6Q24.6 34.1 23.2 34.1" fill="none" stroke="#e2e2e8" stroke-width="1.4"></path></svg>
  <div class="a t" style="left:152px;top:154px;font-size:18.2px;font-weight:bold;color:#f5f5f5;-webkit-text-stroke:0">Test Project</div>
  <svg style="left:273px;top:152px" width="22" height="22"><path d="M3 19.5L4 15L15.5 3.5A2.1 2.1 0 0 1 18.5 6.5L7 18Z" fill="none" stroke="#e8e8e8" stroke-width="1.7" stroke-linejoin="round"></path><path d="M13.6 5.4L16.6 8.4" stroke="#e8e8e8" stroke-width="1.5"></path></svg>
  <div class="a" style="left:1483px;top:140px;width:125px;height:46px;border-radius:9px;border:1px solid #2a2a2a;background:#0a0a0a"></div>
  <svg style="left:1504px;top:153px" width="22" height="20"><circle cx="8" cy="6" r="3.8" fill="none" stroke="#f0f0f0" stroke-width="1.6"></circle><path d="M1.5 18.5A6.5 6.5 0 0 1 14.5 18.5" fill="none" stroke="#f0f0f0" stroke-width="1.6"></path><path d="M13.5 2.5A3.8 3.8 0 0 1 13.5 9.5M16.5 12.5A6.5 6.5 0 0 1 20 18.5" fill="none" stroke="#f0f0f0" stroke-width="1.6"></path></svg>
  <div class="a t" style="left:1536px;top:154.5px;font-size:18px;font-weight:bold;color:#f5f5f5;-webkit-text-stroke:0">Share</div>
  <div class="a" style="left:1629px;top:140px;width:47px;height:47px;border-radius:50%;background:linear-gradient(#4b4b4b,#2e2e2e 70%,#282828)"></div>
  <div class="a t" style="left:1629px;top:154.5px;width:47px;text-align:center;font-size:19px;font-weight:bold;color:#f5f5f5;-webkit-text-stroke:0;transform:scaleX(0.84)">JM</div>

  <!-- explorer -->
  <div class="a t" style="left:94px;top:222.5px;font-size:19px;color:#a3a3a3">Explorer</div>
  <svg style="left:265px;top:221px" width="20" height="22"><path d="M3 2H11.5L17 7.5V19.5A1 1 0 0 1 16 20.5H4A1 1 0 0 1 3 19.5Z" fill="none" stroke="#a3a3a3" stroke-width="1.5" stroke-linejoin="round"></path><path d="M11.5 2V7.5H17M10 10.5V17.5M6.5 14H13.5" fill="none" stroke="#a3a3a3" stroke-width="1.5"></path></svg>
  <svg style="left:300px;top:222px" width="23" height="19"><path d="M2 3A1 1 0 0 1 3 2H8.5L10.5 4.5H19.5A1 1 0 0 1 20.5 5.5V16A1 1 0 0 1 19.5 17H3A1 1 0 0 1 2 16Z" fill="none" stroke="#a3a3a3" stroke-width="1.5" stroke-linejoin="round"></path><path d="M11.2 7.5V14M8 10.8H14.5" stroke="#a3a3a3" stroke-width="1.5"></path></svg>

  <svg style="left:101px;top:270px" width="20" height="22"><path d="M1 1H19L17.3 19.5L10 21.5L2.7 19.5Z" fill="#e44d26"></path><path d="M10 2.5H17.5L16 18.3L10 20Z" fill="#f16529"></path><path d="M5 4.5H15L14.7 7.5H8L8.3 10H14.5L13.8 16.5L10 17.6L6.2 16.5L6 13.5H8.8L9 14.8L10 15.1L11 14.8L11.3 12.7H5.6Z" fill="#fff"></path></svg>
  <div class="a t" style="left:133px;top:272px;font-size:19.2px;color:#f0f0f0">index.html</div>
  <svg style="left:100px;top:313px" width="23" height="10"><rect x="0.9" y="0.9" width="20.2" height="6.8" fill="none" stroke="#c64840" stroke-width="1.3"></rect><path d="M3.2 6.3V2.7H6.6V6.3M8.9 8.9V2.7H12.3V5.7H8.9M14.2 6.3V2.7H19V6.3M16.6 2.7V6.3" fill="none" stroke="#c64840" stroke-width="1.1"></path></svg>
  <div class="a t" style="left:133px;top:309px;font-size:19.2px;color:#f0f0f0">package.json</div>
  <svg style="left:101px;top:345px" width="23" height="22"><path d="M1.5 4.6H10.5L12 1.6H20.6V16.7H1.5Z" fill="#3a783a"></path><path d="M12.6 3.3H19.6" stroke="#2b5d2b" stroke-width="1"></path><path d="M10 9.6L6.4 13.5L10 17.4M16.8 9.6L20.4 13.5L16.8 17.4M14.6 8.2L12.3 19.8" fill="none" stroke="#5ad25a" stroke-width="1.7"></path></svg>
  <div class="a t" style="left:133px;top:345.2px;font-size:19.2px;color:#f0f0f0">src</div>
  <svg style="left:101px;top:380px" width="20" height="22"><path d="M2 1.5H12L18 7.5V20.5H2Z" fill="none" stroke="#d0d0d0" stroke-width="1.6" stroke-linejoin="round"></path><path d="M12 1.5V7.5H18" fill="none" stroke="#d0d0d0" stroke-width="1.6"></path></svg>
  <div class="a t" style="left:133px;top:381.2px;font-size:19.2px;color:#f0f0f0">vite.config.js</div>

  <!-- editor tabs -->
  <div class="a" style="left:343px;top:211px;width:135px;height:41px;border-radius:8px;background:#3d3d3d"></div>
  <div class="a t" style="left:359px;top:223px;font-size:16.2px;color:#ececec">index.html</div>
  <svg style="left:449px;top:226px" width="10" height="10"><path d="M1 1L9 9M9 1L1 9" stroke="#d8d8d8" stroke-width="1.5"></path></svg>
  <div class="a" style="left:489px;top:211px;width:155px;height:41px;border-radius:8px;background:#262626"></div>
  <div class="a t" style="left:504px;top:223px;font-size:16.2px;color:#a8a8a8">package.json</div>
  <svg style="left:615px;top:226px" width="10" height="10"><path d="M1 1L9 9M9 1L1 9" stroke="#a8a8a8" stroke-width="1.5"></path></svg>

  <!-- code box -->
  <div class="a" style="left:343px;top:263px;width:799px;height:590px;border-radius:6px;background:#1e1e1e"></div>
  <div class="a" style="left:1123px;top:263px;width:1px;height:590px;background:#333"></div>
  <div class="a" style="left:1124px;top:572px;width:18px;height:3px;background:#858585"></div>
  <div class="a" style="left:424px;top:574px;width:718px;height:23px;border:2px solid #292929;border-right:none"></div>
  <div class="a" style="left:424px;top:837.5px;width:652px;height:15.5px;background:#474747"></div>
  <!-- indent guides -->
  <div class="a" style="left:424px;top:315px;width:1px;height:234px;background:#404040"></div>
  <div class="a" style="left:443px;top:339px;width:1px;height:94px;background:#404040"></div>
  <div class="a" style="left:443px;top:480px;width:1px;height:47px;background:#404040"></div>
  <div class="a mono" style="left:343px;top:270px;font-size:15.67px;line-height:23.5px;white-space:pre;color:#d4d4d4"><div style="position:relative;height:23.5px"><span style="position:absolute;left:0;width:47px;text-align:right;color:#858585">1</span><span style="position:absolute;left:81px"><span style="color:#569cd6">&lt;!doctype</span><span style="color:#d4d4d4"> </span><span style="color:#9cdcfe">html</span><span style="color:#569cd6">&gt;</span></span></div><div style="position:relative;height:23.5px"><span style="position:absolute;left:0;width:47px;text-align:right;color:#858585">2</span><span style="position:absolute;left:81px"><span style="color:#808080">&lt;</span><span style="color:#569cd6">html</span><span style="color:#d4d4d4"> </span><span style="color:#9cdcfe">lang</span><span style="color:#808080">=</span><span style="color:#cf9a7c">"en"</span><span style="color:#808080">&gt;</span></span></div><div style="position:relative;height:23.5px"><span style="position:absolute;left:0;width:47px;text-align:right;color:#858585">3</span><span style="position:absolute;left:81px"><span style="color:#d4d4d4">  </span><span style="color:#808080">&lt;</span><span style="color:#569cd6">head</span><span style="color:#808080">&gt;</span></span></div><div style="position:relative;height:23.5px"><span style="position:absolute;left:0;width:47px;text-align:right;color:#858585">4</span><span style="position:absolute;left:81px"><span style="color:#d4d4d4">    </span><span style="color:#808080">&lt;</span><span style="color:#569cd6">meta</span><span style="color:#d4d4d4"> </span><span style="color:#9cdcfe">charset</span><span style="color:#808080">=</span><span style="color:#cf9a7c">"UTF-8"</span><span style="color:#d4d4d4"> </span><span style="color:#808080">/&gt;</span></span></div><div style="position:relative;height:23.5px"><span style="position:absolute;left:0;width:47px;text-align:right;color:#858585">5</span><span style="position:absolute;left:81px"><span style="color:#d4d4d4">    </span><span style="color:#808080">&lt;</span><span style="color:#569cd6">link</span><span style="color:#d4d4d4"> </span><span style="color:#9cdcfe">rel</span><span style="color:#808080">=</span><span style="color:#cf9a7c">"icon"</span><span style="color:#d4d4d4"> </span><span style="color:#9cdcfe">type</span><span style="color:#808080">=</span><span style="color:#cf9a7c">"image/svg+xml"</span><span style="color:#d4d4d4"> </span><span style="color:#9cdcfe">href</span><span style="color:#808080">=</span><span style="color:#cf9a7c">"</span><span style="color:#cf9a7c;text-decoration:underline;text-underline-offset:3px">/vite.svg</span><span style="color:#cf9a7c">"</span><span style="color:#d4d4d4"> </span><span style="color:#808080">/&gt;</span></span></div><div style="position:relative;height:23.5px"><span style="position:absolute;left:0;width:47px;text-align:right;color:#858585">6</span><span style="position:absolute;left:81px"><span style="color:#d4d4d4">    </span><span style="color:#808080">&lt;</span><span style="color:#569cd6">meta</span><span style="color:#d4d4d4"> </span><span style="color:#9cdcfe">name</span><span style="color:#808080">=</span><span style="color:#cf9a7c">"viewport"</span><span style="color:#d4d4d4"> </span><span style="color:#9cdcfe">content</span><span style="color:#808080">=</span><span style="color:#cf9a7c">"width=device-width, initial-scale=1.0"</span><span style="color:#d4d4d4"> </span><span style="color:#808080">/&gt;</span></span></div><div style="position:relative;height:23.5px"><span style="position:absolute;left:0;width:47px;text-align:right;color:#858585">7</span><span style="position:absolute;left:81px"><span style="color:#d4d4d4">    </span><span style="color:#808080">&lt;</span><span style="color:#569cd6">title</span><span style="color:#808080">&gt;</span><span style="color:#d4d4d4">React Starter Code </span><span style="display:inline-block;width:15.4px;height:16px;vertical-align:-2.5px;position:relative"><svg style="left:0;top:0" width="16" height="16"><rect x="1" y="13.5" width="2" height="2" fill="#2d43d6"></rect><rect x="12.2" y="13.5" width="2" height="2" fill="#2d43d6"></rect><ellipse cx="7.6" cy="7" rx="4.3" ry="4.6" fill="#e2b68c"></ellipse><path d="M3.2 6.5C3 2.5 5 1 7.6 1C10.2 1 12.2 2.5 12 6.5C11 4.5 9.5 4 7.6 4C5.7 4 4.2 4.5 3.2 6.5Z" fill="#e7c56e"></path><circle cx="6" cy="7.3" r="0.6" fill="#6b4a32"></circle><circle cx="9.2" cy="7.3" r="0.6" fill="#6b4a32"></circle><rect x="1.8" y="9" width="11.6" height="6.6" rx="0.6" fill="#9c9c9c"></rect><rect x="1.8" y="9" width="11.6" height="1" fill="#b5b5b5"></rect><circle cx="7.6" cy="12.2" r="0.7" fill="#d8d8d8"></circle></svg></span><span style="color:#808080">&lt;/</span><span style="color:#569cd6">title</span><span style="color:#808080">&gt;</span></span></div><div style="position:relative;height:23.5px"><span style="position:absolute;left:0;width:47px;text-align:right;color:#858585">8</span><span style="position:absolute;left:81px"><span style="color:#d4d4d4">  </span><span style="color:#808080">&lt;/</span><span style="color:#569cd6">head</span><span style="color:#808080">&gt;</span></span></div><div style="position:relative;height:23.5px"><span style="position:absolute;left:0;width:47px;text-align:right;color:#858585">9</span><span style="position:absolute;left:81px"><span style="color:#d4d4d4">  </span><span style="color:#808080">&lt;</span><span style="color:#569cd6">body</span><span style="color:#808080">&gt;</span></span></div><div style="position:relative;height:23.5px"><span style="position:absolute;left:0;width:47px;text-align:right;color:#858585">10</span><span style="position:absolute;left:81px"><span style="color:#d4d4d4">    </span><span style="color:#808080">&lt;</span><span style="color:#569cd6">div</span><span style="color:#d4d4d4"> </span><span style="color:#9cdcfe">id</span><span style="color:#808080">=</span><span style="color:#cf9a7c">"root"</span><span style="color:#808080">&gt;&lt;/</span><span style="color:#569cd6">div</span><span style="color:#808080">&gt;</span></span></div><div style="position:relative;height:23.5px"><span style="position:absolute;left:0;width:47px;text-align:right;color:#858585">11</span><span style="position:absolute;left:81px"><span style="color:#d4d4d4">    </span><span style="color:#808080">&lt;</span><span style="color:#569cd6">script</span><span style="color:#d4d4d4"> </span><span style="color:#9cdcfe">type</span><span style="color:#808080">=</span><span style="color:#cf9a7c">"module"</span><span style="color:#d4d4d4"> </span><span style="color:#9cdcfe">src</span><span style="color:#808080">=</span><span style="color:#cf9a7c">"</span><span style="color:#cf9a7c;text-decoration:underline;text-underline-offset:3px">/src/main.jsx</span><span style="color:#cf9a7c">"</span><span style="color:#808080">&gt;&lt;/</span><span style="color:#569cd6">script</span><span style="color:#808080">&gt;</span></span></div><div style="position:relative;height:23.5px"><span style="position:absolute;left:0;width:47px;text-align:right;color:#858585">12</span><span style="position:absolute;left:81px"><span style="color:#d4d4d4">  </span><span style="color:#808080">&lt;/</span><span style="color:#569cd6">body</span><span style="color:#808080">&gt;</span></span></div><div style="position:relative;height:23.5px"><span style="position:absolute;left:0;width:47px;text-align:right;color:#858585">13</span><span style="position:absolute;left:81px"><span style="color:#808080">&lt;/</span><span style="color:#569cd6">html</span><span style="color:#808080">&gt;</span></span></div><div style="position:relative;height:23.5px"><span style="position:absolute;left:0;width:47px;text-align:right;color:#c6c6c6">14</span><span style="position:absolute;left:81px"></span></div></div>

  <!-- right panel -->
  <div class="a" style="left:1153px;top:200px;width:1px;height:662px;background:#222"></div>
  <div class="a" style="left:1165px;top:211px;width:511px;height:36px;border-radius:9px 9px 0 0;background:#262626"></div>
  <div class="a" style="left:1153px;top:246px;width:534px;height:1px;background:#1e1e1e"></div>
  <div class="a t" style="left:1180px;top:223.5px;font-size:16.2px;color:#f0f0f0">Preview</div>
  <svg style="left:1642px;top:220px" width="22" height="24"><path d="M11 2.5V8.5M11 15V21" stroke="#f0f0f0" stroke-width="2"></path><path d="M7.6 5.6L11 2L14.4 5.6M7.6 17.9L11 21.5L14.4 17.9" fill="none" stroke="#f0f0f0" stroke-width="2"></path><path d="M0.8 11.3H20.6" stroke="#f0f0f0" stroke-width="2" stroke-linecap="round" stroke-dasharray="2.6 2.6"></path></svg>
  <div class="a" style="left:1165px;top:258px;width:127px;height:41px;border-radius:8px;background:#3f3f3f"></div>
  <svg style="left:1181px;top:269px" width="19" height="19"><rect x="1.5" y="1.5" width="16" height="16" rx="2.5" fill="none" stroke="#e0e0e0" stroke-width="1.5"></rect><path d="M4.5 4.5L6.8 6.8L4.5 9M8 10H12" fill="none" stroke="#e0e0e0" stroke-width="1.5"></path></svg>
  <div class="a t" style="left:1212px;top:270.8px;font-size:16px;color:#f0f0f0">Shell</div>
  <svg style="left:1264px;top:274px" width="10" height="10"><path d="M1 1L9 9M9 1L1 9" stroke="#e0e0e0" stroke-width="1.5"></path></svg>
  <div class="a" style="left:1303px;top:258px;width:41px;height:41px;border-radius:8px;background:#262626"></div>
  <svg style="left:1316px;top:271px" width="15" height="15"><path d="M7.5 0.5V14.5M0.5 7.5H14.5" stroke="#a0a0a0" stroke-width="1.5"></path></svg>
  <div class="a" style="left:1165px;top:310px;width:511px;height:543px;border-radius:8px;background:#262626"></div>
  <div class="a mono" style="left:1175px;top:322.5px;font-size:18.4px;line-height:23.4px;letter-spacing:1.27px;white-space:pre;color:#f2f2f2"><div><span style="color:#f2f2f2">james &gt; pwd</span></div><div><span style="color:#f2f2f2">/Users/james/sandbox/backend/server/pr</span></div><div><span style="color:#f2f2f2">ojects/uch3a193s41r6hg33rgwzwjg</span></div><div><span style="color:#f2f2f2">james &gt; killall Terminal</span></div><div><span style="color:#f2f2f2">james &gt; ls /</span></div><div><span style="color:#4a72b8">Applications</span><span style="color:#f2f2f2"> </span><span style="color:#4a72b8">Users</span><span style="color:#f2f2f2">        </span><span style="color:#4a72b8">cores</span></div><div><span style="color:#f2f2f2"> </span><span style="color:#8a5f9c">home</span><span style="color:#f2f2f2">         </span><span style="color:#4a72b8">sbin</span><span style="color:#f2f2f2">         </span><span style="color:#8a5f9c">var</span></div><div><span style="color:#4a72b8">Library</span><span style="color:#f2f2f2">      </span><span style="color:#4a72b8">Volumes</span><span style="color:#f2f2f2">      </span><span style="color:#4a72b8">dev</span></div><div><span style="color:#f2f2f2"> </span><span style="color:#4a72b8">opt</span><span style="color:#f2f2f2">          </span><span style="color:#8a5f9c">tmp</span></div><div><span style="color:#4a72b8">System</span><span style="color:#f2f2f2">       </span><span style="color:#4a72b8">bin</span><span style="color:#f2f2f2">          </span><span style="color:#8a5f9c">etc</span></div><div><span style="color:#f2f2f2"> </span><span style="color:#4a72b8">private</span><span style="color:#f2f2f2">      </span><span style="color:#4a72b8">usr</span></div><div><span style="color:#f2f2f2">james &gt; </span></div></div>
  <div class="a" style="left:1274px;top:579px;width:12px;height:22px;border:1.5px solid #f2f2f2"></div>

  <!-- bottom copilot -->
  <div>
  <svg style="left:94px;top:827px" width="22" height="22"><path d="M10.5 2.4C11.1 8.6 12.4 10.4 19 11C12.4 11.6 11.1 13.4 10.5 19.6C9.9 13.4 8.6 11.6 2 11C8.6 10.4 9.9 8.6 10.5 2.4Z" fill="none" stroke="#9c9c9c" stroke-width="1.6" stroke-linejoin="round"></path><path d="M4.2 2L5.1 3.9L7 4.8L5.1 5.7L4.2 7.6L3.3 5.7L1.4 4.8L3.3 3.9Z M16.7 14.4L17.6 16.3L19.5 17.2L17.6 18.1L16.7 20L15.8 18.1L13.9 17.2L15.8 16.3Z" fill="#9c9c9c"></path></svg>
  <div class="a t" style="left:125px;top:830px;font-size:19.3px;color:#f0f0f0">Copilot</div>
  <div class="a" style="left:194px;top:823px;width:37px;height:30px;border-radius:6px;border:1.5px solid #a0a0a0;border-bottom-width:3px;background:#0a0a0a"></div>
  <div class="a t" style="left:194px;top:830px;width:37px;text-align:center;font-size:15.5px;color:#b0b0b0;transform:scaleX(0.8);letter-spacing:-0.6px">⌘G</div>
  <div class="a" style="left:275px;top:825px;width:47px;height:26px;border-radius:13px;background:#2a2a2a"></div>
  <div class="a" style="left:277px;top:827px;width:22px;height:22px;border-radius:50%;background:#111"></div>
  </div>
</div></div>
<div class="a" style="left:73px;top:863px;width:1614px;height:36px;border:1px solid #1c1c1c;border-top:none;border-radius:0 0 11px 11px"></div>


</body></html>
